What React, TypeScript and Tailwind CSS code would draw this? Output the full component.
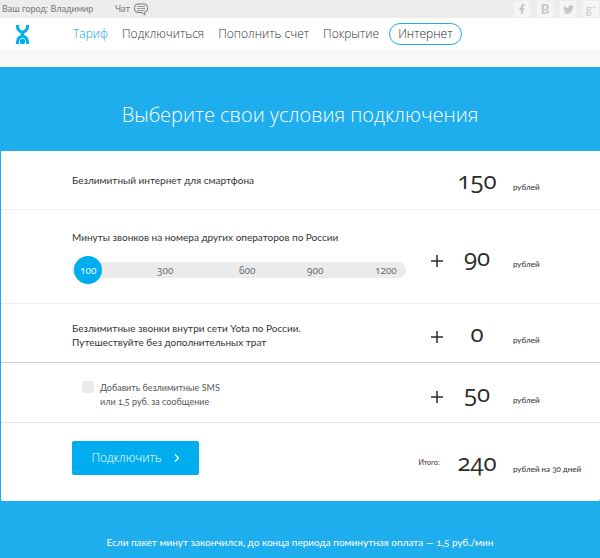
import { useState } from "react";
import type { ReactNode } from "react";
import { FaFacebookF, FaTwitter } from "react-icons/fa";

const minutes = [
  { label: "100", price: 90 },
  { label: "300", price: 240 },
  { label: "600", price: 450 },
  { label: "900", price: 620 },
  { label: "1200", price: 790 },
];

function Logo() {
  return (
    <svg viewBox="0 0 26 38" className="h-[19px] w-[13px]" fill="none" stroke="#00aeef" strokeWidth="6">
      <path d="M3 0v3q0 8 10 12q10-4 10-12V0" />
      <path d="M13 13v10" strokeWidth="7" />
      <path d="M3 38v-4q0-9 10-12q10 3 10 12v4" />
      <circle cx="13" cy="33" r="5.500" fill="#00aeef" stroke="none" />
    </svg>
  );
}

function ChatIcon() {
  return (
    <svg viewBox="0 0 14 13" className="h-[13px] w-[14px]" fill="none" stroke="#777" strokeWidth="1">
      <path d="M4 1h6q3.500 0 3.500 3.500v1.500q0 3-3 3.500l.5 2.500-3-2.500H4Q.5 9.500.5 6V4.500Q.5 1 4 1z" />
      <path d="M3 3.500h8M3 5.500h8M3 7.500h8" strokeWidth=".7" />
    </svg>
  );
}

function Social({ label, children }: { label: string; children: ReactNode }) {
  return (
    <a href="#" aria-label={label} className="flex h-4 w-4 items-center justify-center rounded-xs bg-[#f5f5f5] text-[#c6c6c6]">
      {children}
    </a>
  );
}

function Row({
  sign,
  amount,
  unit,
  className,
  children,
}: {
  sign: ReactNode;
  amount: number;
  unit: string;
  className: string;
  children: ReactNode;
}) {
  return (
    <div className={`grid grid-cols-[minmax(0,1fr)_24px_56px_95px] items-center pl-[71px] ${className}`}>
      <div>{children}</div>
      <div className="flex justify-center">{sign}</div>
      <output className="text-center font-['Open_Sans',sans-serif] text-2xl leading-8 text-[#2b2b2b] oldstyle-nums">{amount}</output>
      <div className="pt-[14px] pl-2 text-[8px] leading-3 whitespace-nowrap text-[#2b2b2b] oldstyle-nums">{unit}</div>
    </div>
  );
}

function Plus() {
  return (
    <svg viewBox="0 0 12 12" className="mt-2 h-3 w-3" stroke="#2b2b2b" strokeWidth="1.500">
      <path d="M6 0v12M0 6h12" />
    </svg>
  );
}

export default function App() {
  const [step, setStep] = useState(0);
  const [sms, setSms] = useState(false);
  const total = 150 + minutes[step].price + (sms ? 50 : 0);

  return (
    <div className="bg-[#1eaeed] font-[Lato,'Open_Sans',sans-serif] text-[#333]">
      <div className="flex h-[18px] items-center justify-between bg-[#ededed] pr-px pl-[2px] text-[9px] text-[#777]">
        <div className="flex items-center">
          <span>Ваш город: Владимир</span>
          <a href="#" className="ml-[22px] flex items-center gap-1">
            Чат <ChatIcon />
          </a>
        </div>
        <div className="flex gap-[7px]">
          <Social label="Facebook"><FaFacebookF size={10} /></Social>
          <Social label="ВКонтакте"><span className="text-[13px] leading-4 font-black">B</span></Social>
          <Social label="Twitter"><FaTwitter size={11} /></Social>
          <Social label="Google+">
            <span className="flex items-start font-['Open_Sans',sans-serif] text-[11px] leading-3">
              g<span className="text-[8px] leading-2">+</span>
            </span>
          </Social>
        </div>
      </div>

      <header className="flex h-[31px] items-center bg-white pl-4">
        <a href="#" aria-label="Yota" className="pt-[2px]"><Logo /></a>
        <nav className="ml-11 flex items-center gap-[14px] font-['Open_Sans',sans-serif] text-xs font-light whitespace-nowrap text-[#333]">
          <a href="#" className="text-[#0a9fe0]">Тариф</a>
          <a href="#">Подключиться</a>
          <a href="#">Пополнить счет</a>
          <a href="#">Покрытие</a>
          <a href="#" className="-ml-1 rounded-full border border-[#1eaeed] px-2 leading-5 text-[#222]">Интернет</a>
        </nav>
      </header>
      <div className="h-[18px] bg-[#f8f8f8]" />

      <main>
        <h1 className="pt-[38px] pb-[26px] text-center font-['Open_Sans',sans-serif] text-xl leading-5 font-light text-white">Выберите свои условия подключения</h1>

        <form className="ml-px rounded-b-xs bg-white text-[10px] leading-[14px]" onSubmit={(e) => e.preventDefault()}>
          <Row className="h-[59px] border-b border-[#eee]" sign={null} amount={150} unit="рублей">
            Безлимитный интернет для смартфона
          </Row>

          <Row className="h-[94px] border-b border-[#eee]" sign={<Plus />} amount={minutes[step].price} unit="рублей">
            <label htmlFor="minutes">Минуты звонков на номера других операторов по России</label>
            <div className="mt-3 grid max-w-[334px]">
              <input
                id="minutes"
                type="range"
                min={0}
                max={4}
                value={step}
                onChange={(e) => setStep(Number(e.target.value))}
                className="col-start-1 row-start-1 h-7 w-full appearance-none bg-transparent [&::-webkit-slider-runnable-track]:h-4 [&::-webkit-slider-runnable-track]:rounded-full [&::-webkit-slider-runnable-track]:bg-[#ebebeb] [&::-webkit-slider-thumb]:-mt-[6px] [&::-webkit-slider-thumb]:ml-[2px] [&::-webkit-slider-thumb]:h-7 [&::-webkit-slider-thumb]:w-7 [&::-webkit-slider-thumb]:appearance-none [&::-webkit-slider-thumb]:rounded-full [&::-webkit-slider-thumb]:bg-[#00aeef]"
              />
              <div className="pointer-events-none relative col-start-1 row-start-1 grid grid-cols-[77fr_82fr_68fr_68fr_31fr] items-center pl-2 font-['Open_Sans',sans-serif] text-[#666] oldstyle-nums">
                {minutes.map((m, i) => (
                  <span key={m.label} className={i === step ? "text-white" : ""}>{m.label}</span>
                ))}
              </div>
            </div>
          </Row>

          <Row className="h-[59px] border-b border-[#ccc]" sign={<Plus />} amount={0} unit="рублей">
            <p className="pt-1">
              Безлимитные звонки внутри сети Yota по России.
              <br />
              Путешествуйте без дополнительных трат
            </p>
          </Row>

          <Row className="h-[60px] border-b border-[#e4e4e4]" sign={<Plus />} amount={50} unit="рублей">
            <label className="ml-[10px] flex gap-[6px] pt-1 text-[9px] text-[#555] oldstyle-nums">
              <input
                type="checkbox"
                checked={sms}
                onChange={(e) => setSms(e.target.checked)}
                className="h-3 w-3 appearance-none rounded-xs bg-[#ebebeb] checked:bg-[#00aeef]"
              />
              <span>
                Добавить безлимитные SMS
                <br />
                или 1,5 руб. за сообщение
              </span>
            </label>
          </Row>

          <Row
            className="h-[78px]"
            sign={<span className="pr-4 text-[7px] text-[#2b2b2b]">Итого:</span>}
            amount={total}
            unit="рублей на 30 дней"
          >
            <button type="submit" className="mb-2 flex h-[34px] w-[127px] items-center justify-center gap-3 rounded-xs bg-[#00aeef] font-['Open_Sans',sans-serif] text-xs font-light text-white">
              Подключить
              <svg viewBox="0 0 6 8" className="h-2 w-[6px]" fill="none" stroke="currentColor" strokeWidth="1.200">
                <path d="M1 .5 4.500 4 1 7.500" />
              </svg>
            </button>
          </Row>
        </form>

        <p className="pt-[34px] pb-[9px] text-center text-[10px] leading-[14px] text-white oldstyle-nums">
          Если пакет минут закончился, до конца периода поминутная оплата — 1,5 руб./мин
        </p>
      </main>
    </div>
  );
}
